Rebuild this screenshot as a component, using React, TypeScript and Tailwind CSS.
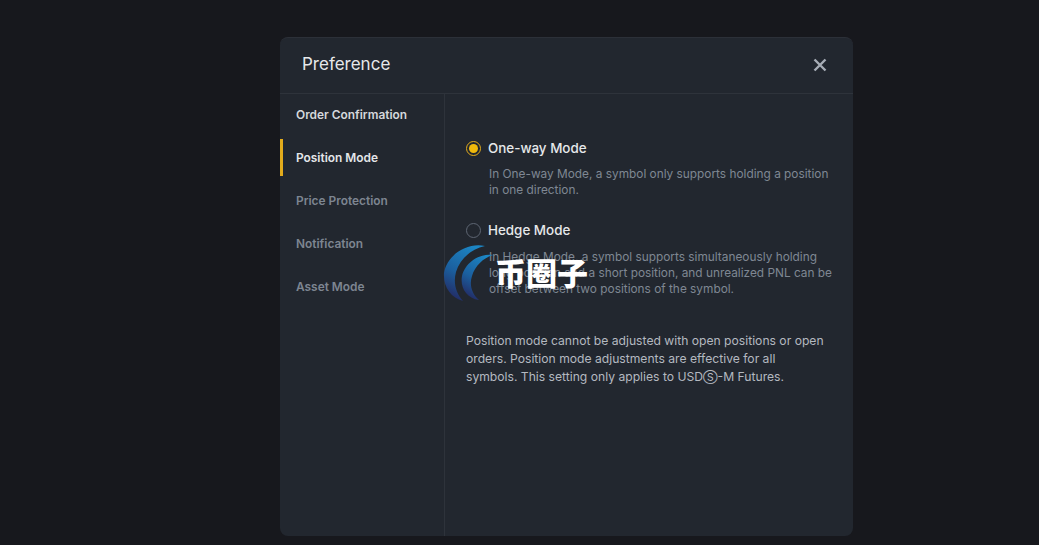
import React from "react";

const nav = [
  { t: "Order Confirmation", c: "text-[#d5d8dc]" },
  { t: "Position Mode", c: "text-[#e4e6e9]", active: true },
  { t: "Price Protection", c: "text-[#7d8591]" },
  { t: "Notification", c: "text-[#7d8591]" },
  { t: "Asset Mode", c: "text-[#7d8591]" },
];

function Watermark() {
  return (
    <div className="absolute left-[443px] top-[243px] w-[150px] h-[60px] pointer-events-none">
      <svg width="60" height="60" viewBox="0 0 60 60" className="absolute left-0 top-0">
        <defs>
          <linearGradient id="wm" x1="0.7" y1="0" x2="0.3" y2="1">
            <stop offset="0" stopColor="#1c86c4" />
            <stop offset="0.55" stopColor="#1b5f9e" />
            <stop offset="1" stopColor="#232a63" />
          </linearGradient>
        </defs>
        <path d="M42 3C24 -1 4 12 1 30C0 44 8 55 20 58C13 50 10 40 13 29C17 16 28 6 42 3Z" fill="url(#wm)" />
        <path d="M50 12C36 10 22 20 19 33C17 44 23 55 36 57C29 51 26 42 29 33C32 23 40 15 50 12Z" fill="url(#wm)" />
      </svg>
      <span className="absolute left-[52px] top-[11px] text-[31px] leading-[36px] font-black text-white whitespace-nowrap font-['Noto_Sans_CJK_SC',sans-serif]">
        币圈子
      </span>
    </div>
  );
}

export default function App() {
  return (
    <div className="relative w-[1039px] h-[545px] bg-[#17181d] overflow-hidden font-['Inter','Noto_Sans_CJK_SC',sans-serif] pt-[37px] pl-[280px]">
      <div className="w-[573px] h-[499px] bg-[#22272f] rounded-[8px] border-t border-t-[#2c3038] flex flex-col overflow-hidden">
        <div className="h-[56px] shrink-0 flex items-center justify-between pl-[22px] pr-[25px] pb-[1px] border-b border-[#2e333b]">
          <span className="text-[17px] text-[#e6e8ea]">Preference</span>
          <svg width="16" height="16" viewBox="0 0 16 16" className="text-[#a7adb6]">
            <path d="M2.5 2.5L13.5 13.5M13.5 2.5L2.5 13.5" stroke="currentColor" strokeWidth="2.4" />
          </svg>
        </div>
        <div className="flex-1 flex min-h-0">
          <div className="w-[165px] shrink-0 border-r border-[#2e333b] pt-[2px]">
            {nav.map((n) => (
              <div
                key={n.t}
                className={`h-[37px] mb-[6px] flex items-center pl-[13px] text-[11.9px] font-semibold border-l-[3px] ${n.c} ${n.active ? "border-[#e2ab1c]" : "border-transparent"}`}
              >
                {n.t}
              </div>
            ))}
          </div>
          <div className="flex-1 pl-[21px] pr-[24px] pt-[45px]">
            <div className="flex items-center gap-[7px] h-[18px]">
              <span className="w-[15px] h-[15px] rounded-full border border-[#e2ab1c] flex items-center justify-center">
                <span className="w-[9px] h-[9px] rounded-full bg-[#f0b90b]" />
              </span>
              <span className="text-[13.4px] font-medium text-[#e6e8ea]">One-way Mode</span>
            </div>
            <p className="ml-[23px] -mr-[4px] mt-[9px] text-[11.85px] leading-[16px] text-[#7f8793]">
              In One-way Mode, a symbol only supports holding a position in one direction.
            </p>
            <div className="flex items-center gap-[7px] h-[18px] mt-[23px]">
              <span className="w-[15px] h-[15px] rounded-full border border-[#5e6673]" />
              <span className="text-[13.4px] font-medium text-[#e6e8ea]">Hedge Mode</span>
            </div>
            <p className="ml-[23px] -mr-[4px] mt-[10px] text-[11.85px] leading-[16px] text-[#7f8793]">
              In Hedge Mode, a symbol supports simultaneously holding long position and a short position, and unrealized PNL can be offset between two positions of the symbol.
            </p>
            <p className="mt-[35px] text-[12.15px] leading-[18px] text-[#b4b9c0]">
              Position mode cannot be adjusted with open positions or open orders. Position mode adjustments are effective for all symbols. This setting only applies to USD<span className="text-[10.5px]">Ⓢ</span>-M Futures.
            </p>
          </div>
        </div>
      </div>
      <Watermark />
    </div>
  );
}
